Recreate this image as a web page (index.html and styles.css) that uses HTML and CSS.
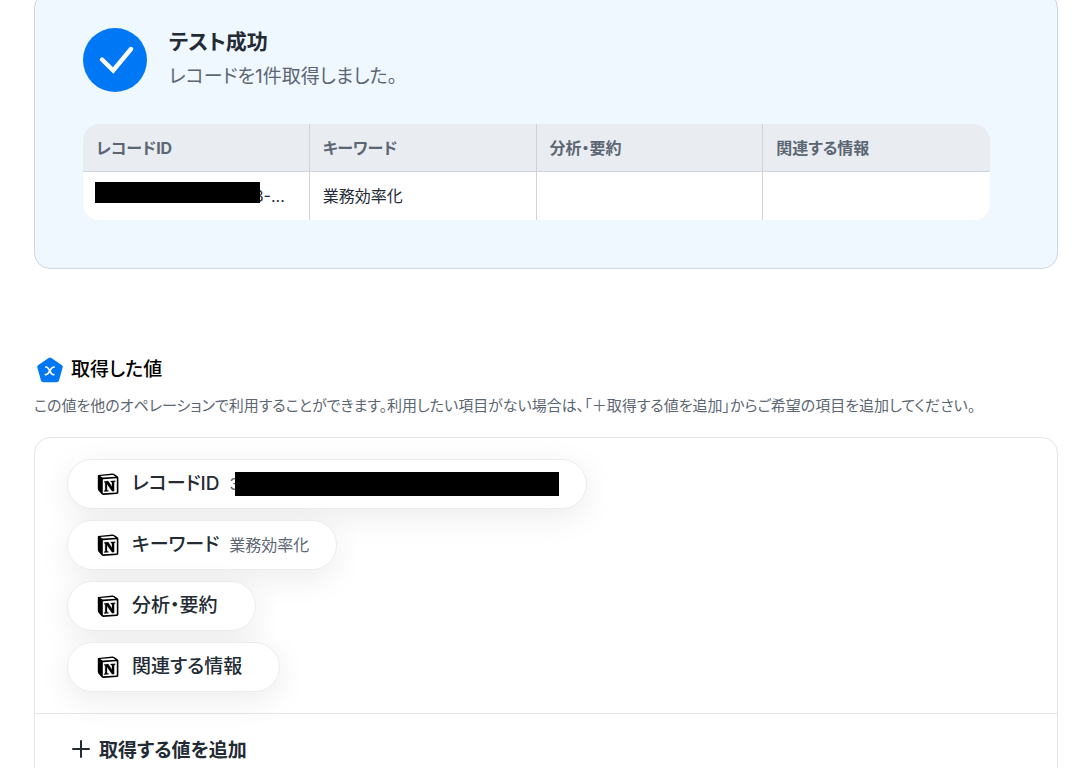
FILE: index.html
```html
<!DOCTYPE html>
<html lang="ja">
<head>
<meta charset="utf-8">
<title>テスト成功</title>
<link rel="stylesheet" href="styles.css">
</head>
<body>
<svg class="defs" aria-hidden="true">
  <symbol id="notion" viewBox="0 0 22 22">
    <path d="M1.2 2.1 15.4.6Q16.4.5 17.2 1L20.6 3.2Q21.4 3.8 21.4 4.8V19.4Q21.4 20.8 20 21L6.3 21.9Q5.1 22 4.4 21.1L1.4 17.4Q.8 16.5.8 15.4V3Q.8 2.2 1.2 2.1Z" fill="#000"/>
    <path d="M3.2 3 15.2 1.9Q15.8 1.8 16.2 2.1L18.6 3.7 6.2 4.6Q5.6 4.6 5.1 4.2Z" fill="#fff"/>
    <path d="M6.2 6.2 19.2 5.3Q19.8 5.3 19.8 5.8V18.9Q19.8 19.4 19.3 19.5L6.4 20.3Q5.8 20.3 5.8 19.7V6.8Q5.8 6.2 6.2 6.2Z" fill="#fff"/>
    <path d="M7.2 8.4 11.2 8.1 15 13.8V9.3L13.8 9V8.1L18.2 7.8V8.6L17.1 9V18L15.1 18.2 10 10.9V17.2L11.4 17.5V18.3L7.2 18.5V17.7L8.2 17.3V9.6L7.2 9.2Z" fill="#000" stroke="#000" stroke-width=".3"/>
  </symbol>
</svg>
<main class="page">
  <section class="result">
    <header class="result-head">
      <svg class="check" viewBox="0 0 64 64" aria-hidden="true"><circle cx="32" cy="32" r="32" fill="#0077f5"/><path d="M19 31.5 30.2 42.5 48 21" fill="none" stroke="#fff" stroke-width="4.4" stroke-linecap="round"/></svg>
      <div>
        <h1 class="result-title">テスト成功</h1>
        <p class="result-text">レコードを1件取得しました。</p>
      </div>
    </header>
    <table class="records">
      <thead><tr><th>レコードID</th><th>キーワード</th><th>分析・要約</th><th>関連する情報</th></tr></thead>
      <tbody><tr><td class="masked">3-...<span class="mask"></span></td><td>業務効率化</td><td></td><td></td></tr></tbody>
    </table>
  </section>
  <section class="values">
    <h2 class="values-title">
      <svg class="penta" viewBox="0 0 26 26" aria-hidden="true"><path d="M13 3 23.2 10 19.6 22.8H6.4L2.8 10Z" fill="#0077f5" stroke="#0077f5" stroke-width="5" stroke-linejoin="round"/><path d="M8.8 10H9.4Q10.5 10 11.1 11.1L14.2 16.3Q15 17.6 16.2 17.6H16.8M17.2 10Q15.4 10 14.4 11.5L11.4 16Q10.3 17.6 8.4 17.6" fill="none" stroke="#fff" stroke-width="1.7" stroke-linecap="round"/></svg>
      取得した値
    </h2>
    <p class="values-text">この値を他のオペレーションで利用することができます。利用したい項目がない場合は、「＋取得する値を追加」からご希望の項目を追加してください。</p>
    <div class="panel">
      <ul class="pills">
        <li class="pill"><svg class="notion" aria-hidden="true"><use href="#notion"/></svg><span class="name">レコードID</span><span class="value">3</span><span class="bar"></span></li>
        <li class="pill"><svg class="notion" aria-hidden="true"><use href="#notion"/></svg><span class="name">キーワード</span><span class="value">業務効率化</span></li>
        <li class="pill"><svg class="notion" aria-hidden="true"><use href="#notion"/></svg><span class="name">分析・要約</span></li>
        <li class="pill"><svg class="notion" aria-hidden="true"><use href="#notion"/></svg><span class="name">関連する情報</span></li>
      </ul>
      <button class="add" type="button"><svg class="plus" viewBox="0 0 18 18" aria-hidden="true"><path d="M9 1V17M1 9H17" stroke="#232b35" stroke-width="2" stroke-linecap="round"/></svg>取得する値を追加</button>
    </div>
  </section>
</main>
</body>
</html>
```
FILE: styles.css
```css
* { box-sizing: border-box; }
body {
  margin: 0;
  background: #fff;
  color: #232b35;
  font-family: Inter, "Noto Sans CJK JP", sans-serif;
  font-feature-settings: "palt";
  overflow: hidden;
}
h1, h2, p, ul { margin: 0; padding: 0; }
.defs { display: none; }
.page { padding: 0 34px; }
.result {
  margin-top: -8px;
  padding: 35px 67px 48px 48px;
  border: 1px solid #ced6df;
  border-radius: 16px;
  background: #eff7ff;
}
.result-head { display: flex; gap: 22px; margin-bottom: 32px; }
.check { width: 64px; height: 64px; flex: none; }
.result-title { font-size: 21px; line-height: 28px; font-weight: 700; }
.result-text { margin-top: 6px; font-size: 19px; line-height: 30px; color: #5c6673; }
.records {
  width: 100%;
  table-layout: fixed;
  border-spacing: 0;
  border-radius: 16px;
  overflow: hidden;
  background: #fff;
  font-size: 16px;
  line-height: 24px;
}
.records th, .records td { height: 48px; padding: 0 13px; text-align: left; font-weight: 400; border-right: 1px solid #ced3de; }
.records th { background: #e9edf2; color: #5c6673; font-weight: 700; border-bottom: 1px solid #ced3de; }
.records th:last-child, .records td:last-child { border-right: 0; }
.records .masked { position: relative; padding-right: 24px; text-align: right; }
.mask { position: absolute; left: 12px; top: 10px; width: 165px; height: 21px; background: #000; }
.values { padding-top: 84px; }
.values-title { display: flex; align-items: center; gap: 8px; padding-left: 3px; color: #000; font-size: 19px; line-height: 34px; font-weight: 500; }
.penta { width: 26px; height: 26px; }
.values-text { margin-top: 7px; font-size: 15px; line-height: 24px; color: #5c6673; }
.panel { margin-top: 19px; border: 1px solid #e3e5e8; border-radius: 16px; }
.pills { display: flex; flex-direction: column; align-items: flex-start; gap: 11px; padding: 21px 32px; list-style: none; }
.pill {
  display: flex;
  align-items: center;
  height: 50px;
  padding: 0 27px 0 29px;
  border: 1px solid #e9edf2;
  border-radius: 25px;
  background: #fff;
  box-shadow: 0 8px 32px rgba(0, 0, 0, 0.08);
}
.notion { width: 22px; height: 22px; margin-right: 13px; }
.name { margin-right: 10px; font-size: 19px; line-height: 28px; font-weight: 500; }
.value { font-size: 16px; line-height: 24px; color: #5c6673; }
.bar { width: 324px; height: 24px; margin-left: -4px; background: #000; }
.add {
  display: flex;
  align-items: center;
  gap: 9px;
  width: 100%;
  height: 70px;
  padding: 0 37px;
  border: 0;
  border-top: 1px solid #e3e5e8;
  background: none;
  color: inherit;
  font: inherit;
  font-feature-settings: inherit;
  font-size: 19px;
  font-weight: 700;
}
.plus { width: 18px; height: 18px; }
```
